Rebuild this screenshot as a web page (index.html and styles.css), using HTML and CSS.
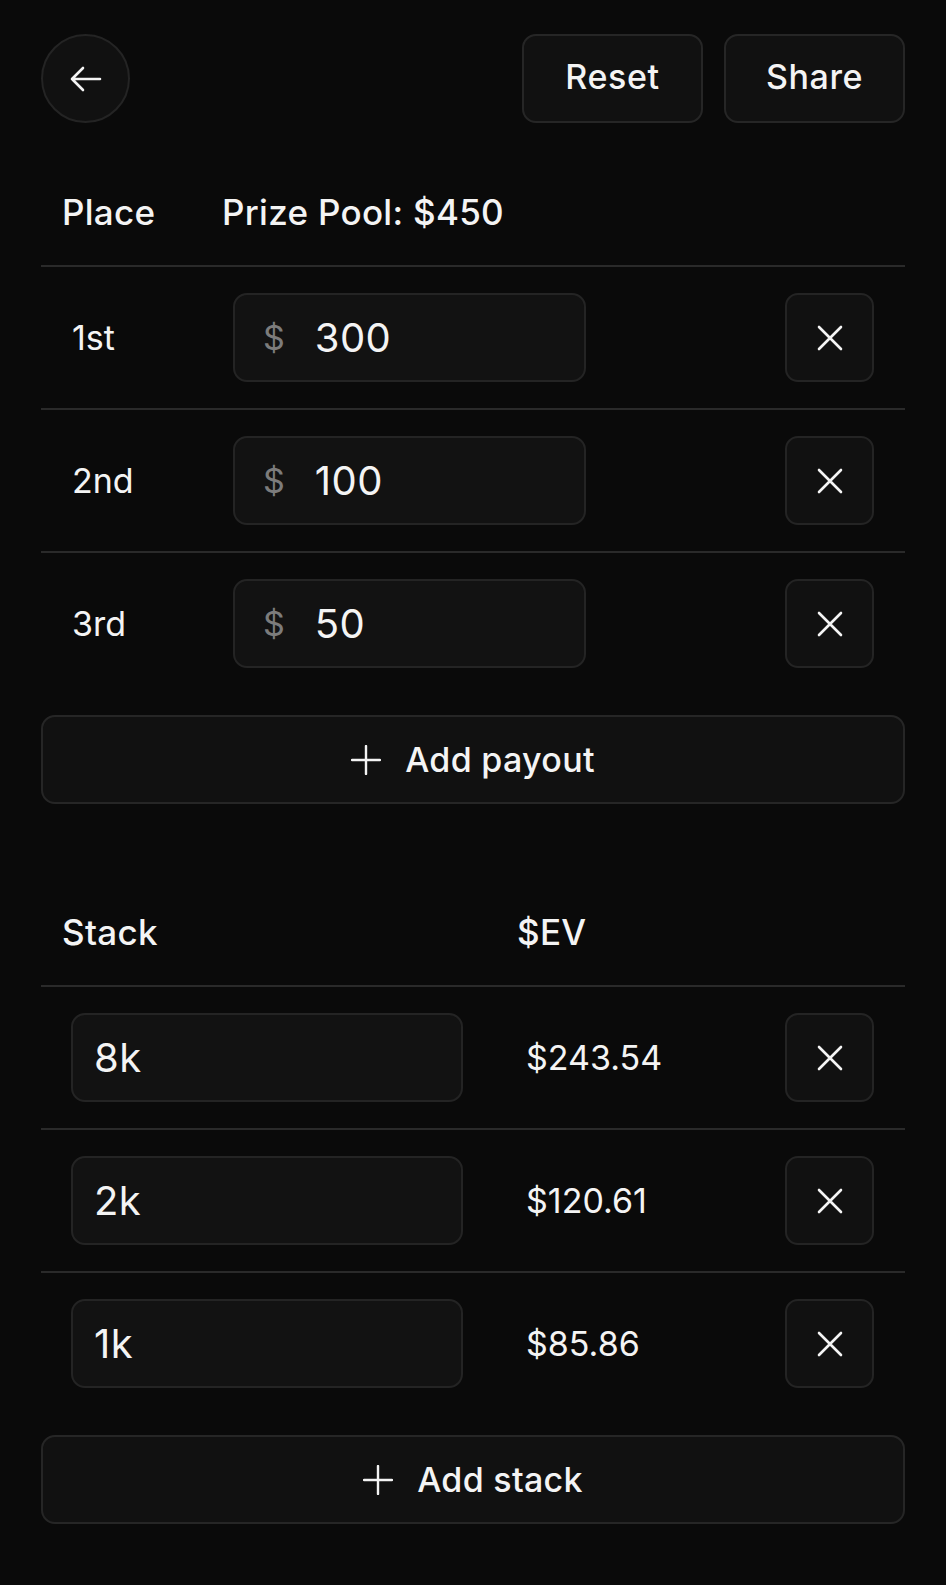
FILE: index.html
```html
<!DOCTYPE html>
<html lang="en">
<head>
    <meta charset="UTF-8">
    <meta name="viewport" content="width=device-width, initial-scale=1.0">
    <title>ICM Calculator</title>
    <link rel="stylesheet" href="styles.css">
</head>
<body>
    <div class="topbar">
        <button class="back-btn" aria-label="Back">
            <svg width="32" height="26" viewBox="0 0 32 26" fill="none" stroke="currentColor" stroke-width="2.6" stroke-linecap="round" stroke-linejoin="round">
                <path d="M30 13H2M13 2L2 13L13 24"/>
            </svg>
        </button>
        <div class="actions">
            <button class="btn">Reset</button>
            <button class="btn">Share</button>
        </div>
    </div>

    <!-- Payouts -->
    <section class="payouts">
        <div class="table-head">
            <span class="col-place">Place</span>
            <span>Prize Pool: $450</span>
        </div>

        <div class="row">
            <span class="place">1st</span>
            <label class="field money"><span class="prefix">$</span><input type="text" value="300"></label>
            <button class="remove" aria-label="Remove">
                <svg width="26" height="26" viewBox="0 0 26 26" stroke="currentColor" stroke-width="2.6" stroke-linecap="round"><path d="M2 2L24 24M24 2L2 24"/></svg>
            </button>
        </div>
        <div class="row">
            <span class="place">2nd</span>
            <label class="field money"><span class="prefix">$</span><input type="text" value="100"></label>
            <button class="remove" aria-label="Remove">
                <svg width="26" height="26" viewBox="0 0 26 26" stroke="currentColor" stroke-width="2.6" stroke-linecap="round"><path d="M2 2L24 24M24 2L2 24"/></svg>
            </button>
        </div>
        <div class="row">
            <span class="place">3rd</span>
            <label class="field money"><span class="prefix">$</span><input type="text" value="50"></label>
            <button class="remove" aria-label="Remove">
                <svg width="26" height="26" viewBox="0 0 26 26" stroke="currentColor" stroke-width="2.6" stroke-linecap="round"><path d="M2 2L24 24M24 2L2 24"/></svg>
            </button>
        </div>

        <button class="add-btn">
            <svg width="30" height="30" viewBox="0 0 30 30" stroke="currentColor" stroke-width="2.4" stroke-linecap="round"><path d="M15 1V29M1 15H29"/></svg>
            <span>Add payout</span>
        </button>
    </section>

    <!-- Stacks -->
    <section class="stacks">
        <div class="table-head">
            <span class="col-stack">Stack</span>
            <span>$EV</span>
        </div>

        <div class="row">
            <label class="field stack"><input type="text" value="8k"></label>
            <span class="ev">$243.54</span>
            <button class="remove" aria-label="Remove">
                <svg width="26" height="26" viewBox="0 0 26 26" stroke="currentColor" stroke-width="2.6" stroke-linecap="round"><path d="M2 2L24 24M24 2L2 24"/></svg>
            </button>
        </div>
        <div class="row">
            <label class="field stack"><input type="text" value="2k"></label>
            <span class="ev">$120.61</span>
            <button class="remove" aria-label="Remove">
                <svg width="26" height="26" viewBox="0 0 26 26" stroke="currentColor" stroke-width="2.6" stroke-linecap="round"><path d="M2 2L24 24M24 2L2 24"/></svg>
            </button>
        </div>
        <div class="row">
            <label class="field stack"><input type="text" value="1k"></label>
            <span class="ev">$85.86</span>
            <button class="remove" aria-label="Remove">
                <svg width="26" height="26" viewBox="0 0 26 26" stroke="currentColor" stroke-width="2.6" stroke-linecap="round"><path d="M2 2L24 24M24 2L2 24"/></svg>
            </button>
        </div>

        <button class="add-btn">
            <svg width="30" height="30" viewBox="0 0 30 30" stroke="currentColor" stroke-width="2.4" stroke-linecap="round"><path d="M15 1V29M1 15H29"/></svg>
            <span>Add stack</span>
        </button>
    </section>
</body>
</html>
```

FILE: styles.css
```css
body {
    font-family: Inter, "Noto Sans", sans-serif;
    background-color: #0a0a0a;
    color: #f4f4f4;
    margin: 0;
    padding: 34px 41px;
    font-size: 34px;
}
button {
    font-family: inherit;
    color: inherit;
    cursor: pointer;
}
.topbar {
    display: flex;
    justify-content: space-between;
    align-items: center;
    height: 89px;
}
.back-btn {
    width: 89px;
    height: 89px;
    border-radius: 50%;
    border: 2px solid #242424;
    background: #111;
    display: flex;
    align-items: center;
    justify-content: center;
    padding: 0;
}
.actions {
    display: flex;
    gap: 21px;
}
.btn {
    width: 181px;
    height: 89px;
    border-radius: 14px;
    border: 2px solid #262626;
    background: #111;
    font-size: 34px;
    font-weight: 500;
    letter-spacing: 0.6px;
    padding: 0 0 4px;
}
.table-head {
    display: flex;
    padding: 32px 21px;
    line-height: 41px;
    font-size: 35px;
    font-weight: 500;
    letter-spacing: 0.3px;
    border-bottom: 2px solid #2a2a2a;
}
.payouts .table-head {
    margin-top: 37px;
}
.stacks .table-head {
    margin-top: 76px;
}
.col-place {
    width: 160px;
}
.col-stack {
    width: 455px;
}
.row {
    display: flex;
    align-items: center;
    padding: 26px 31px 26px 30px;
    border-bottom: 2px solid #2a2a2a;
}
.row:last-of-type {
    border-bottom: none;
}
.place {
    width: 161px;
    padding-left: 1px;
}
.field {
    display: flex;
    align-items: center;
    height: 89px;
    box-sizing: border-box;
    border: 2px solid #242424;
    border-radius: 14px;
    background: #121212;
}
.field input {
    background: transparent;
    border: none;
    outline: none;
    color: #f4f4f4;
    font-family: inherit;
    font-size: 40px;
    letter-spacing: 0.4px;
    padding: 0;
    width: 100%;
}
.money {
    width: 353px;
    padding-left: 28px;
}
.prefix {
    color: #7c7c7c;
    margin-right: 30px;
}
.stack {
    width: 392px;
    padding-left: 21px;
}
.ev {
    margin-left: 63px;
}
.remove {
    margin-left: auto;
    width: 89px;
    height: 89px;
    border-radius: 13px;
    border: 2px solid #242424;
    background: #111;
    display: flex;
    align-items: center;
    justify-content: center;
    padding: 0;
}
.add-btn {
    margin-top: 21px;
    width: 100%;
    height: 89px;
    border-radius: 14px;
    border: 2px solid #262626;
    background: #111;
    display: flex;
    align-items: center;
    justify-content: center;
    gap: 24px;
    font-size: 34px;
    font-weight: 500;
    letter-spacing: 0.3px;
}
```
